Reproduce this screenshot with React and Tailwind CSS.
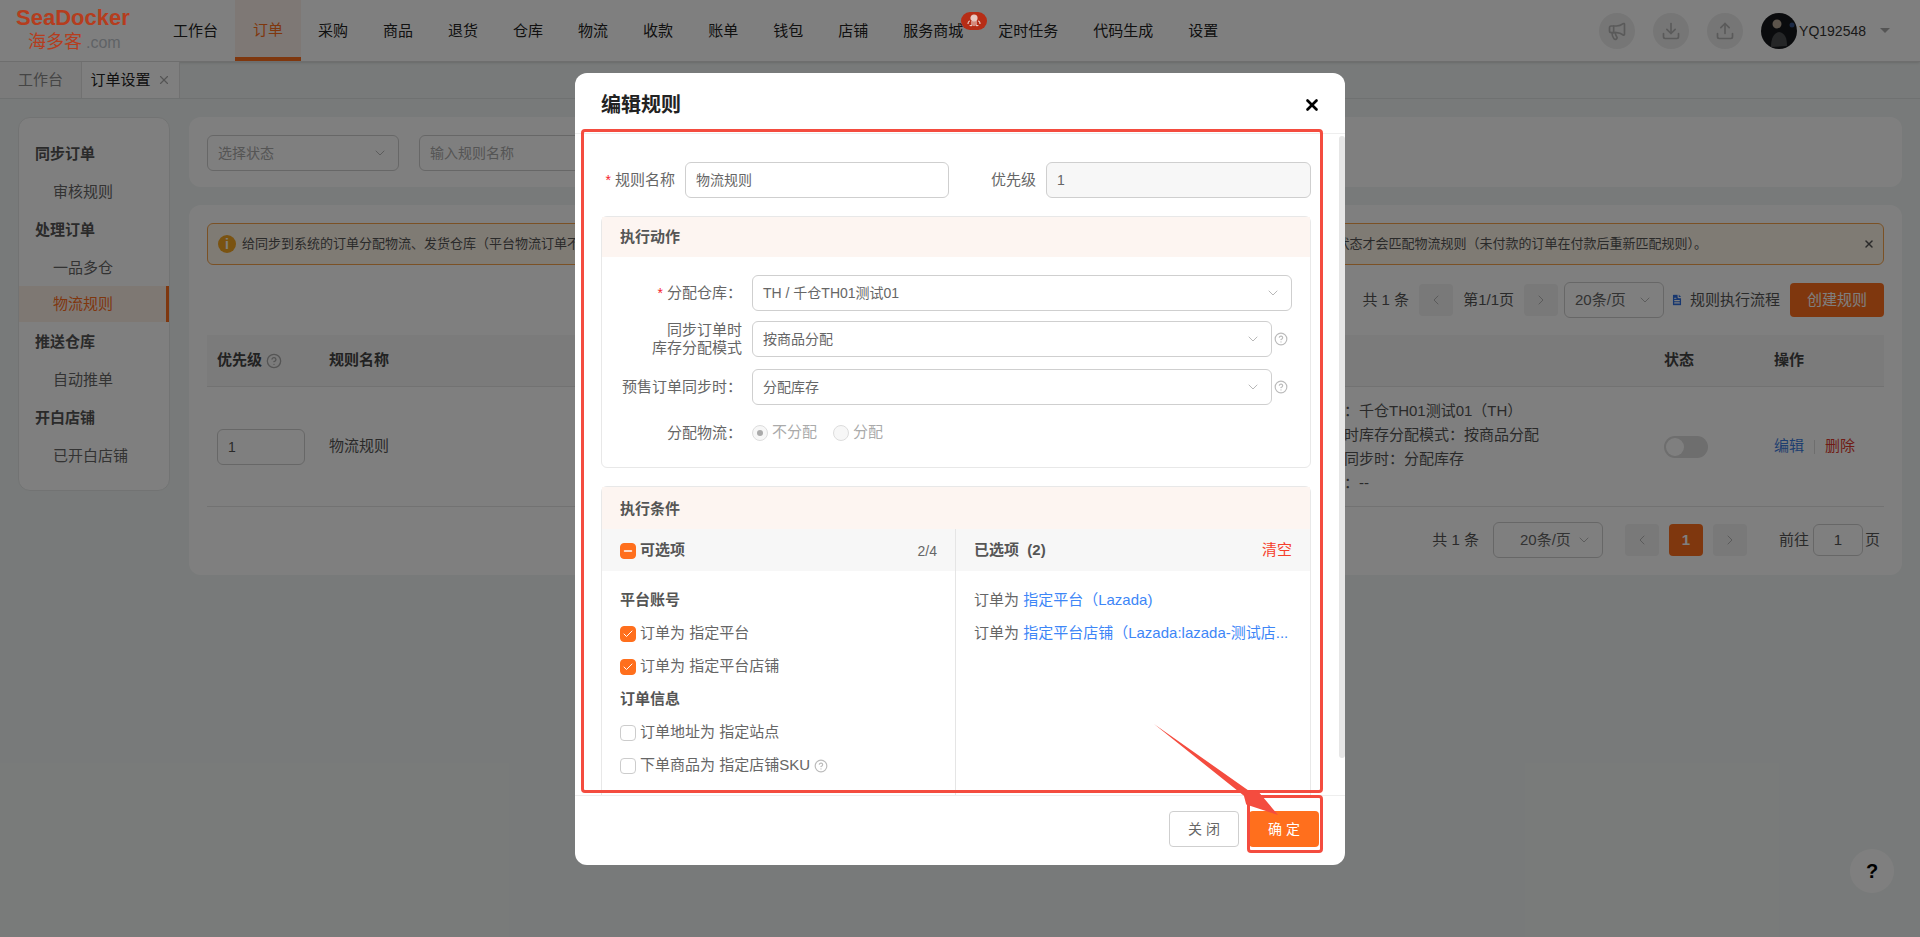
import React from 'react';
import { ChevronDown, ChevronLeft, ChevronRight, X, Megaphone, Download, Upload, HelpCircle, Check, Minus, FileText } from 'lucide-react';

const navItems = ['工作台', '订单', '采购', '商品', '退货', '仓库', '物流', '收款', '账单', '钱包', '店铺', '服务商城', '定时任务', '代码生成', '设置'];

function Nav() {
  return (
    <nav className="flex h-full -space-x-px">
      {navItems.map((n) => (
        <div key={n} className={`relative flex h-full items-center px-4.5 ${n === '订单' ? 'border-b-4 border-[#ff6f1d] bg-[#fdf1ea] pt-1 text-[#ff6f1d]' : 'pt-0.5 text-[#222]'}`}>
          {n}
          {n === '服务商城' && (
            <span className="absolute -right-1.5 top-3 z-20 flex h-4.5 w-6.5 items-center justify-center rounded-full bg-[#b62d16]">
              <svg viewBox="0 0 20 16" className="h-4 w-5" fill="none" stroke="#e8c9c2" strokeWidth="1.2">
                <circle cx="10" cy="5" r="3" fill="#e8c9c2" />
                <path d="M8 8v4c0 1-2 1-2 0M10 8v5M12 8v4c0 1 2 1 2 0M6 8c-1 0-2 1-2 3M14 8c1 0 2 1 2 3" />
              </svg>
            </span>
          )}
        </div>
      ))}
    </nav>
  );
}

function RoundIcon({ icon: Icon }) {
  return (
    <div className="flex h-9 w-9 items-center justify-center rounded-full bg-[#ececec]">
      <Icon className="h-5 w-5 text-[#b5b5b5]" />
    </div>
  );
}

function Header() {
  return (
    <header className="flex h-15.5 shrink-0 items-center border-b border-[#dcdcdc] bg-white shadow-sm">
      <div className="relative z-20 flex w-38.75 shrink-0 flex-col pl-4 pt-0.5">
        <div className="text-[22px] font-bold leading-5 text-[#b53d1e]">SeaDocker</div>
        <div className="flex items-baseline pl-3 leading-5">
          <span className="text-lg text-[#b53d1e]">海多客</span>
          <span className="pl-1 text-base text-[#5f6366]">.com</span>
        </div>
      </div>
      <Nav />
      <div className="ml-auto flex items-center gap-4.5 pr-7.5">
        <RoundIcon icon={Megaphone} />
        <RoundIcon icon={Download} />
        <RoundIcon icon={Upload} />
        <div className="flex items-center gap-0.5 text-sm text-[#333]">
          <svg viewBox="0 0 36 36" className="h-9 w-9">
            <circle cx="18" cy="18" r="18" fill="#15171a" />
            <path d="M10 34c0-9 3-14 8-15 6 1 8 6 8 14z" fill="#4a4d4f" />
            <circle cx="16" cy="11" r="4.5" fill="#b9a896" />
            <circle cx="31" cy="12" r="2.5" fill="#36528a" />
          </svg>
          YQ192548
          <span className="ml-3 h-0 w-0 border-x-[5px] border-t-[5px] border-x-transparent border-t-[#aaa]" />
        </div>
      </div>
    </header>
  );
}

function Tabs() {
  return (
    <div className="flex h-9.25 shrink-0 border-b border-[#dfe3e3] text-[#8a8a8a]">
      <div className="flex w-20.5 items-center justify-center border-r border-[#e3e3e3] bg-[#f7f7f7]">工作台</div>
      <div className="flex w-24.5 items-center justify-center gap-1.5 border-r border-[#e3e3e3] bg-white text-[#222]">
        订单设置
        <X className="h-3.5 w-3.5 text-[#aaa]" />
      </div>
    </div>
  );
}

function Sidebar() {
  const Title = ({ children }) => <div className="flex h-10 items-center pl-4 font-bold text-[#555]">{children}</div>;
  const Item = ({ children, active }) => (
    <div className={`flex h-9 items-center pl-8.5 ${active ? 'border-r-3 border-[#ff6f1d] bg-[#fdf0e7] text-[#ff6f1d]' : 'text-[#666]'}`}>{children}</div>
  );
  return (
    <aside className="w-38 shrink-0 self-start rounded-xl border border-[#e4e7e7] bg-white py-4">
      <Title>同步订单</Title>
      <Item>审核规则</Item>
      <Title>处理订单</Title>
      <Item>一品多仓</Item>
      <Item active>物流规则</Item>
      <Title>推送仓库</Title>
      <Item>自动推单</Item>
      <Title>开白店铺</Title>
      <Item>已开白店铺</Item>
    </aside>
  );
}

function Select({ children, className = '', placeholder }) {
  return (
    <div className={`flex h-9 items-center justify-between rounded-md border border-[#cfcfcf] bg-white px-2.5 text-sm ${placeholder ? 'text-[#aaa]' : 'text-[#666]'} ${className}`}>
      <span>{children}</span>
      <ChevronDown className="h-4 w-4 text-[#aaa]" strokeWidth={1.25} />
    </div>
  );
}

function PageBtn({ children, active }) {
  return (
    <div className={`flex h-8 w-8.5 items-center justify-center rounded-sm ${active ? 'bg-[#ff6f1d] font-bold text-white' : 'bg-[#f2f2f2] text-[#aaa]'}`}>{children}</div>
  );
}

function Toolbar() {
  return (
    <div className="mt-4.5 flex h-8.5 items-center justify-end text-[#555]">
      <span>共 1 条</span>
      <div className="ml-2.5"><PageBtn><ChevronLeft className="h-4 w-4" strokeWidth={1.25} /></PageBtn></div>
      <span className="mx-2.5">第1/1页</span>
      <PageBtn><ChevronRight className="h-4 w-4" strokeWidth={1.25} /></PageBtn>
      <Select className="ml-1.5 h-8 w-25 !text-[15px]">20条/页</Select>
      <FileText className="ml-1.5 h-4 w-3.5 text-[#2f6fe0]" fill="#2f6fe0" stroke="white" />
      <span className="ml-1.5">规则执行流程</span>
      <div className="ml-2.5 flex h-8.5 w-23.5 items-center justify-center rounded-sm bg-[#ff6f1d] text-white">创建规则</div>
    </div>
  );
}

function RuleTable() {
  return (
    <div className="mt-4.5">
      <div className="flex h-13 items-center border-b border-[#e5e5e5] bg-[#f7f7f7] font-bold text-[#444]">
        <div className="flex w-28 shrink-0 items-center gap-1 pl-2.5">优先级 <HelpCircle className="h-4 w-4 text-[#aaa]" /></div>
        <div className="flex-1 pl-2.5">规则名称</div>
        <div className="w-96 pl-6">执行动作</div>
        <div className="w-28 pl-5">状态</div>
        <div className="w-32 pl-4.5">操作</div>
      </div>
      <div className="flex h-30 items-center border-b border-[#e5e5e5] text-[#555]">
        <div className="w-28 shrink-0 pl-2.5">
          <div className="flex h-9 w-22 items-center rounded-md border border-[#cfcfcf] px-2.5 text-sm">1</div>
        </div>
        <div className="flex-1 pl-2.5">物流规则</div>
        <div className="w-96 pl-6 leading-6">
          <div>分配仓库：千仓TH01测试01（TH）</div>
          <div>同步订单时库存分配模式：按商品分配</div>
          <div>预售订单同步时：分配库存</div>
          <div>分配物流：--</div>
        </div>
        <div className="w-28 pl-5">
          <div className="flex h-5.5 w-11 items-center rounded-full bg-[#dcdcdc] px-0.5">
            <div className="h-4.5 w-4.5 rounded-full bg-white" />
          </div>
        </div>
        <div className="flex w-32 items-center gap-2.5 pl-4.5">
          <span className="text-[#3d7de0]">编辑</span>
          <span className="h-3.5 w-px bg-[#ddd]" />
          <span className="text-[#e0392b]">删除</span>
        </div>
      </div>
    </div>
  );
}

function Pagination() {
  return (
    <div className="mt-4.5 flex h-7.5 items-center justify-end pr-1 text-[#555]">
      <span>共 1 条</span>
      <Select className="ml-3.5 h-8 w-27.5 !text-[15px]"><span className="pl-4">20条/页</span></Select>
      <div className="ml-5.5 flex gap-2.5">
        <PageBtn><ChevronLeft className="h-4 w-4" strokeWidth={1.25} /></PageBtn>
        <PageBtn active>1</PageBtn>
        <PageBtn><ChevronRight className="h-4 w-4" strokeWidth={1.25} /></PageBtn>
      </div>
      <span className="ml-8">前往</span>
      <div className="ml-1 mr-0.5 flex h-8 w-12.5 items-center justify-center rounded-md border border-[#cfcfcf]">1</div>
      <span>页</span>
    </div>
  );
}

function Main() {
  return (
    <main className="flex min-w-0 flex-1 flex-col gap-4.5">
      <div className="flex gap-5 rounded-xl bg-white px-4.5 pb-4 pt-4.5">
        <Select placeholder className="w-48">选择状态</Select>
        <div className="flex h-9 w-48 items-center rounded-md border border-[#cfcfcf] px-2.5 text-sm text-[#aaa]">输入规则名称</div>
      </div>
      <div className="rounded-xl bg-white px-4.5 pb-5 pt-4.5">
        <div className="flex h-10.5 items-center justify-between rounded-md border border-[#f6a34a] bg-[#fff6e8] pl-2.5 pr-2 text-[13px] text-[#555]">
          <div className="flex items-center gap-1.5">
            <span className="flex h-4.5 w-4.5 items-center justify-center rounded-full bg-[#f5a623] text-sm font-bold text-white">i</span>
            给同步到系统的订单分配物流、发货仓库（平台物流订单不
          </div>
          <div className="flex items-center gap-39">
            <span>状态才会匹配物流规则（未付款的订单在付款后重新匹配规则）。</span>
            <X className="h-3 w-3 text-[#555]" strokeWidth={3} />
          </div>
        </div>
        <Toolbar />
        <RuleTable />
        <Pagination />
      </div>
    </main>
  );
}

function Box({ checked, indeterminate }) {
  const on = checked || indeterminate;
  return (
    <span className={`flex h-4 w-4 shrink-0 items-center justify-center rounded-sm border ${on ? 'border-[#ff6f1d] bg-[#ff6f1d]' : 'border-[#ccc] bg-white'}`}>
      {checked && <Check className="h-3 w-3 text-white" strokeWidth={2} />}
      {indeterminate && <Minus className="h-3 w-3 text-white" strokeWidth={3} />}
    </span>
  );
}

function Label({ children, required, className = '' }) {
  return (
    <div className={`flex shrink-0 items-center justify-end text-right leading-4.5 text-[#666] ${className}`}>
      {required && <span className="mr-1 text-sm text-[#f5222d]">*</span>}
      <span>{children}</span>
    </div>
  );
}

function Help() {
  return <HelpCircle className="h-3.5 w-3.5 text-[#bbb]" />;
}

function Radio({ on, children }) {
  return (
    <span className="flex items-center gap-1 text-[#aaa]">
      <span className="flex h-4 w-4 items-center justify-center rounded-full border border-[#ddd] bg-[#f7f7f7]">
        {on && <span className="h-1.5 w-1.5 rounded-full bg-[#aaa]" />}
      </span>
      {children}
    </span>
  );
}

function CheckRow({ checked, children }) {
  return (
    <div className="flex h-8 items-center gap-1 text-[#666]">
      <Box checked={checked} />
      {children}
    </div>
  );
}

function Modal() {
  return (
    <div className="relative flex h-198 w-192.5 flex-col rounded-xl bg-white">
      <div className="flex h-15.25 shrink-0 items-center justify-between border-b border-[#eee] pl-6.5 pr-6 pt-1">
        <span className="text-xl font-bold text-[#222]">编辑规则</span>
        <X className="h-4.5 w-4.5 text-black" strokeWidth={3.5} />
      </div>
      <div className="relative min-h-0 flex-1 overflow-hidden pl-6.5 pr-8.5 pt-7">
        <div className="flex items-center">
          <Label required className="w-21 pr-2.5">规则名称</Label>
          <div className="flex h-9 w-66 items-center rounded-md border border-[#cfcfcf] px-2.5 text-sm text-[#666]">物流规则</div>
          <Label className="ml-10.5">优先级</Label>
          <div className="ml-2.5 flex h-9 flex-1 items-center rounded-md border border-[#cfcfcf] bg-[#f7f7f7] px-2.5 text-sm text-[#666]">1</div>
        </div>

        <section className="mt-4.5 rounded-md border border-[#e8e8e8]">
          <div className="flex h-10 items-center bg-[#fdf5f1] pl-4.5 pt-0.5 font-bold text-[#555]">执行动作</div>
          <div className="pb-4 pt-4.5">
            <div className="flex items-center">
              <Label required className="w-37.5 pr-2.5">分配仓库：</Label>
              <Select className="w-135">TH / 千仓TH01测试01</Select>
            </div>
            <div className="mt-2.5 flex items-center">
              <Label className="w-37.5 pr-2.5">同步订单时<br />库存分配模式</Label>
              <Select className="w-130">按商品分配</Select>
              <span className="ml-0.5"><Help /></span>
            </div>
            <div className="mt-3 flex items-center">
              <Label className="w-37.5 pr-2.5">预售订单同步时：</Label>
              <Select className="w-130">分配库存</Select>
              <span className="ml-0.5"><Help /></span>
            </div>
            <div className="mt-2.5 flex h-9 items-center">
              <Label className="w-37.5 pr-2.5">分配物流：</Label>
              <div className="flex items-center gap-4">
                <Radio on>不分配</Radio>
                <Radio>分配</Radio>
              </div>
            </div>
          </div>
        </section>

        <section className="mt-4.5 rounded-md border border-[#e8e8e8]">
          <div className="flex h-10.5 items-center bg-[#fdf5f1] pl-4.5 pt-1 font-bold text-[#555]">执行条件</div>
          <div className="flex h-72">
            <div className="w-88.5 shrink-0 border-r border-[#e5e5e5]">
              <div className="flex h-10.5 items-center justify-between bg-[#f7f7f7] px-4.5 pt-0.5">
                <span className="flex items-center gap-1 font-bold text-[#555]">
                  <Box indeterminate />
                  可选项
                </span>
                <span className="text-sm text-[#666]">2/4</span>
              </div>
              <div className="flex flex-col gap-px px-4.5 pt-3.5">
                <div className="flex h-8 items-center font-bold text-[#555]">平台账号</div>
                <CheckRow checked>订单为 指定平台</CheckRow>
                <CheckRow checked>订单为 指定平台店铺</CheckRow>
                <div className="flex h-8 items-center font-bold text-[#555]">订单信息</div>
                <CheckRow>订单地址为 指定站点</CheckRow>
                <CheckRow>
                  <span className="flex items-center gap-1">下单商品为 指定店铺SKU <HelpCircle className="h-3.5 w-3.5 text-[#bbb]" /></span>
                </CheckRow>
              </div>
            </div>
            <div className="min-w-0 flex-1">
              <div className="flex h-10.5 items-center justify-between bg-[#f7f7f7] px-4.5 pt-0.5">
                <span className="font-bold text-[#555]">已选项&nbsp;&nbsp;(2)</span>
                <span className="text-[#f5402c]">清空</span>
              </div>
              <div className="flex flex-col gap-px px-4.5 pt-3.5">
                <div className="flex h-8 items-center text-[#666]">订单为&nbsp;<span className="text-[#3d86f7]">指定平台（Lazada)</span></div>
                <div className="flex h-8 items-center whitespace-nowrap text-[#666]">订单为&nbsp;<span className="text-[#3d86f7]">指定平台店铺（Lazada:lazada-测试店...</span></div>
              </div>
            </div>
          </div>
        </section>
        <div className="absolute right-0 top-0.5 h-155.5 w-1.5 rounded-full bg-[#e6e6e6]" />
      </div>
      <div className="flex h-17.5 shrink-0 items-center justify-end gap-2.5 border-t border-[#eee] pb-0.5 pr-6.5 text-sm">
        <div className="flex h-9 w-17.5 items-center justify-center rounded-sm border border-[#cfcfcf] text-[#666]">关 闭</div>
        <div className="relative flex h-9 w-17.5 items-center justify-center rounded-sm bg-[#ff6f1d] text-white">
          确 定
          <div className="absolute -bottom-1.5 -left-0.5 -right-1 -top-4 rounded-sm border-3 border-[#f44c3f]" />
        </div>
      </div>
      <div className="pointer-events-none absolute bottom-18 left-1.5 right-5.5 top-14 rounded-sm border-3 border-[#f44c3f]" />
      <svg viewBox="0 0 770 792" className="pointer-events-none absolute inset-0 h-full w-full">
        <polygon points="579,651 668.9,722.8 671.2,731.4 703,742 682,717 673.1,717.2" fill="#f44c3f" />
      </svg>
    </div>
  );
}

export default function App() {
  return (
    <div className="relative flex h-screen flex-col overflow-hidden bg-[#f1f5f4] font-['Liberation_Sans','Noto_Sans_CJK_SC',sans-serif] text-[15px]">
      <Header />
      <Tabs />
      <div className="flex min-h-0 flex-1 items-start gap-4.75 px-4.5 pt-4.5">
        <Sidebar />
        <Main />
      </div>
      <div className="absolute bottom-11 right-6.5 flex h-11 w-11 items-center justify-center rounded-full bg-white text-xl font-bold text-black">?</div>
      <div className="absolute inset-0 z-10 bg-black/50" />
      <div className="absolute inset-0 z-30 flex items-center justify-center">
        <Modal />
      </div>
    </div>
  );
}
